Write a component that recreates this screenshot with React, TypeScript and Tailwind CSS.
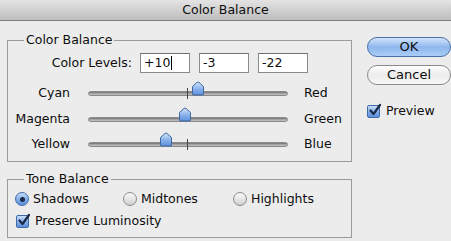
import React from "react";

const font = { fontFamily: '"DejaVu Sans", "Noto Sans", sans-serif' };

function Thumb({ x }: { x: number }) {
  return (
    <svg
      className="absolute"
      style={{ left: x - 7, top: -10 }}
      width="14"
      height="15"
      viewBox="0 0 14 15"
    >
      <defs>
        <linearGradient id="tg" x1="0" y1="0" x2="0" y2="1">
          <stop offset="0" stopColor="#d6e6fb" />
          <stop offset="0.5" stopColor="#8db5ec" />
          <stop offset="1" stopColor="#5d8fdc" />
        </linearGradient>
      </defs>
      <path
        d="M6 1.4 Q7 0.8 8 1.4 L12.5 5.5 L12.5 13 Q12.5 14 11.5 14 L2.5 14 Q1.5 14 1.5 13 L1.5 5.5 Z"
        fill="url(#tg)"
        stroke="#41679f"
        strokeWidth="1"
      />
    </svg>
  );
}

function SliderRow({
  left,
  right,
  value,
  tick,
  h,
}: {
  left: string;
  right: string;
  value: number;
  tick: boolean;
  h: string;
}) {
  return (
    <div className={`flex items-center ${h}`}>
      <div className="w-[62px] text-right text-[12.5px]">{left}</div>
      <div className="ml-[18px] w-[200px] relative h-[5px]">
        <div className="absolute inset-0 rounded-full bg-gradient-to-b from-[#6f6f6f] via-[#a4a4a4] to-[#c4c4c4] border border-[#8a8a8a]" />
        {tick && (
          <div className="absolute left-[99px] top-[-3px] w-[1px] h-[11px] bg-[#444]" />
        )}
        <Thumb x={100 + value} />
      </div>
      <div className="ml-[16px] text-[12.5px]">{right}</div>
    </div>
  );
}

function Radio({ on }: { on: boolean }) {
  return on ? (
    <div className="w-[14px] h-[14px] rounded-full border border-[#3f6aa8] bg-gradient-to-b from-[#c9def8] via-[#86b0ea] to-[#5a8ede] flex items-center justify-center">
      <div className="w-[5px] h-[5px] rounded-full bg-[#1c2c48]" />
    </div>
  ) : (
    <div className="w-[14px] h-[14px] rounded-full border border-[#8c8c8c] bg-gradient-to-b from-[#f8f8f8] via-[#e6e6e6] to-[#cfcfcf]" />
  );
}

function Check() {
  return (
    <div className="relative w-[13px] h-[13px] rounded-[2px] border border-[#3f6aa8] bg-gradient-to-b from-[#c9def8] via-[#86b0ea] to-[#5a8ede]">
      <svg className="absolute left-[0px] top-[-3px]" width="14" height="14" viewBox="0 0 14 14">
        <path d="M2.5 7.5 L5.5 11 L12 2" fill="none" stroke="#1b2a45" strokeWidth="2.2" strokeLinecap="round" strokeLinejoin="round" />
      </svg>
    </div>
  );
}

function Input({ v, cursor }: { v: string; cursor?: boolean }) {
  return (
    <div className="w-[50px] h-[20px] bg-white border border-[#8a8a8a] border-t-[#6f6f6f] flex items-center pl-[3px] text-[12.5px]">
      <span>{v}</span>
      {cursor && <span className="inline-block w-[1px] h-[14px] bg-black ml-[1px]" />}
    </div>
  );
}

export default function App() {
  return (
    <div className="w-[451px] h-[241px] bg-[#ececec] overflow-hidden text-[#0d0d0d]" style={font}>
      <div className="h-[21px] bg-gradient-to-b from-[#e4e4e4] to-[#bdbdbd] border-b border-[#7d7d7d] flex items-center justify-center text-[12.5px]">
        Color Balance
      </div>
      <div className="flex">
        <div className="ml-[7px] w-[346px]">
          <div className="relative mt-[19px] h-[122px] border border-[#9a9a9a]">
            <span className="absolute left-[16px] top-[-9px] px-[2px] bg-[#ececec] text-[12.5px] leading-[16px]">
              Color Balance
            </span>
            <div className="flex items-center mt-[12px] h-[20px]">
              <div className="w-[124px] text-right text-[12.5px]">Color Levels:</div>
              <div className="ml-[8px] flex gap-[9px]">
                <Input v="+10" cursor />
                <Input v="-3" />
                <Input v="-22" />
              </div>
            </div>
            <div className="mt-[7px]">
              <SliderRow left="Cyan" right="Red" value={10} tick h="h-[26px]" />
              <SliderRow left="Magenta" right="Green" value={-3} tick={false} h="h-[26px]" />
              <SliderRow left="Yellow" right="Blue" value={-22} tick h="h-[25px]" />
            </div>
          </div>
          <div className="relative mt-[17px] h-[59px] border border-[#9a9a9a]">
            <span className="absolute left-[16px] top-[-9px] px-[2px] bg-[#ececec] text-[12.5px] leading-[16px]">
              Tone Balance
            </span>
            <div className="flex items-center mt-[11px] ml-[7px] h-[16px] text-[12.5px]">
              <div className="flex items-center gap-[4px] w-[108px]">
                <Radio on />
                <span>Shadows</span>
              </div>
              <div className="flex items-center gap-[4px] w-[110px]">
                <Radio on={false} />
                <span>Midtones</span>
              </div>
              <div className="flex items-center gap-[4px]">
                <Radio on={false} />
                <span>Highlights</span>
              </div>
            </div>
            <div className="flex items-center mt-[5px] ml-[8px] gap-[6px] text-[12.5px]">
              <Check />
              <span>Preserve Luminosity</span>
            </div>
          </div>
        </div>
        <div className="ml-[15px] flex flex-col">
          <div className="mt-[16px] w-[84px] h-[20px] rounded-full border border-[#4a6ea6] bg-gradient-to-b from-[#d2e4fb] via-[#8fb7ee] to-[#a9cdf6] flex items-center justify-center text-[13px]">
            OK
          </div>
          <div className="mt-[8px] w-[84px] h-[20px] rounded-full border border-[#8a8a8a] bg-gradient-to-b from-[#ffffff] via-[#ececec] to-[#f8f8f8] flex items-center justify-center text-[13px]">
            Cancel
          </div>
          <div className="mt-[17px] flex items-center gap-[6px] text-[12.5px]">
            <Check />
            <span>Preview</span>
          </div>
        </div>
      </div>
    </div>
  );
}
